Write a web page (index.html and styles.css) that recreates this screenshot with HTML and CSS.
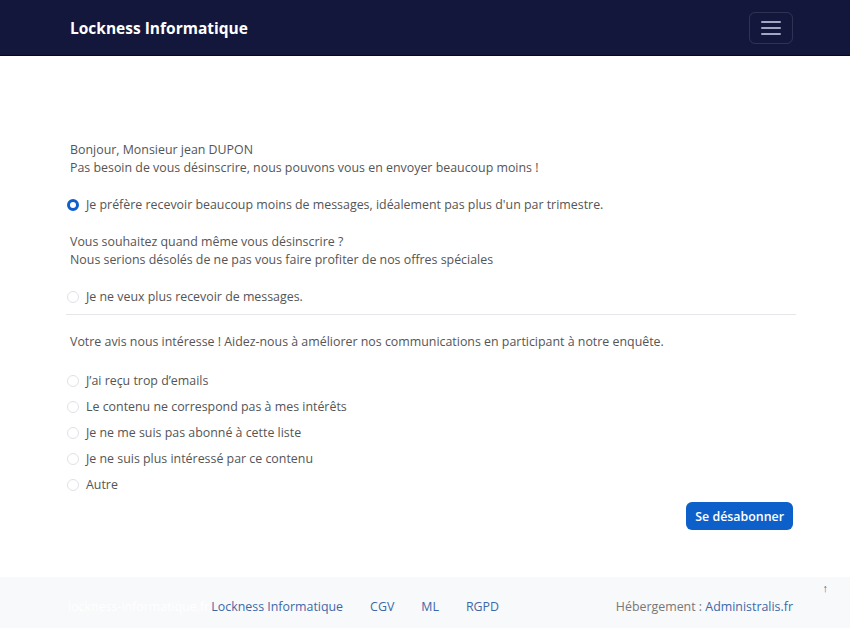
FILE: index.html
```html
<!DOCTYPE html>
<html lang="fr">
<head>
<meta charset="utf-8">
<title>Lockness Informatique</title>
<link rel="stylesheet" href="styles.css">
</head>
<body>
<header class="navbar">
  <div class="container nav-inner">
    <a class="brand" href="#">Lockness Informatique</a>
    <button class="toggler" type="button" aria-label="Menu">
      <svg width="20" height="16" viewBox="0 0 20 16"><path d="M1 2h18M1 8h18M1 14h18" stroke="#a4a7c4" stroke-width="2" stroke-linecap="round"/></svg>
    </button>
  </div>
</header>

<main class="container main">
  <p class="text">Bonjour, Monsieur jean DUPON<br>Pas besoin de vous désinscrire, nous pouvons vous en envoyer beaucoup moins !</p>
  <label class="radio"><input type="radio" name="choice" checked><span>Je préfère recevoir beaucoup moins de messages, idéalement pas plus d'un par trimestre.</span></label>
  <p class="text">Vous souhaitez quand même vous désinscrire ?<br>Nous serions désolés de ne pas vous faire profiter de nos offres spéciales</p>
  <label class="radio"><input type="radio" name="choice"><span>Je ne veux plus recevoir de messages.</span></label>
  <hr class="sep">
  <p class="text survey">Votre avis nous intéresse ! Aidez-nous à améliorer nos communications en participant à notre enquête.</p>
  <div class="reasons">
    <label class="radio"><input type="radio" name="reason"><span>J’ai reçu trop d’emails</span></label>
    <label class="radio"><input type="radio" name="reason"><span>Le contenu ne correspond pas à mes intérêts</span></label>
    <label class="radio"><input type="radio" name="reason"><span>Je ne me suis pas abonné à cette liste</span></label>
    <label class="radio"><input type="radio" name="reason"><span>Je ne suis plus intéressé par ce contenu</span></label>
    <label class="radio"><input type="radio" name="reason"><span>Autre</span></label>
  </div>
  <div class="actions"><button class="btn" type="button">Se désabonner</button></div>
</main>

<footer class="footer">
  <div class="container foot-inner">
    <div class="foot-left">
      <span class="ghost">lockness-informatique.fr</span>
      <a href="#">Lockness Informatique</a>
      <a href="#">CGV</a>
      <a href="#">ML</a>
      <a href="#">RGPD</a>
    </div>
    <div class="foot-right">Hébergement : <a href="#">Administralis.fr</a></div>
  </div>
  <a class="totop" href="#">↑</a>
</footer>
</body>
</html>
```

FILE: styles.css
```css
* { box-sizing: border-box; }
html, body { margin: 0; padding: 0; }
body {
  font-family: "Open Sans", "Noto Sans", sans-serif;
  font-size: 12.4px;
  color: #555;
  background: #fff;
}
.container { width: 730px; margin: 0 auto 0 66px; }

.navbar {
  background: #13173c;
  height: 56px;
  border-bottom: 1px solid #05062a;
}
.nav-inner {
  height: 100%;
  display: flex;
  align-items: center;
  justify-content: space-between;
  padding: 0 3px 0 4px;
}
.brand {
  color: #fff;
  text-decoration: none;
  font-weight: 700;
  font-size: 15.5px;
}
.toggler {
  width: 44px;
  height: 32px;
  border: 1px solid rgba(255,255,255,0.12);
  border-radius: 6px;
  background: transparent;
  display: flex;
  align-items: center;
  justify-content: center;
  padding: 0;
}

.main { padding: 85px 0 47px; }
.text {
  margin: 0 0 19px 4px;
  line-height: 18px;
}
.radio {
  display: flex;
  align-items: center;
  gap: 7px;
  line-height: 18px;
  margin: 0 0 19px 1px;
}
.radio input {
  margin: 0;
  width: 12px;
  height: 12px;
  appearance: none;
  -webkit-appearance: none;
  border: 1px solid #dee2e6;
  border-radius: 50%;
  background: #fff;
  flex: none;
}
.radio input:checked {
  border: 3.5px solid #0d5fc9;
}
.sep {
  border: 0;
  border-top: 1px solid #e4e6ea;
  margin: -11px 0 18px;
}
.survey { margin-bottom: 21px; }
.reasons .radio { margin-bottom: 8px; }
.actions {
  display: flex;
  justify-content: flex-end;
  padding-right: 3px;
  margin-top: 2px;
}
.btn {
  background: #0d5fc9;
  color: #fff;
  border: 0;
  border-radius: 6px;
  font-family: inherit;
  font-size: 12.4px;
  font-weight: 600;
  height: 28px;
  padding: 0 9px;
}

.footer {
  background: #f8f9fb;
  height: 51px;
  position: relative;
}
.foot-inner {
  height: 100%;
  display: flex;
  align-items: center;
  justify-content: space-between;
  padding: 7px 3px 0 2px;
}
.foot-left { display: flex; align-items: center; gap: 27px; }
.foot-left .ghost { color: #fff; margin-right: -25px; }
.footer a { color: #3d68a8; text-decoration: none; }
.foot-right { color: #777; }
.totop {
  position: absolute;
  right: 22px;
  top: 3px;
  font-size: 11px;
}
```
